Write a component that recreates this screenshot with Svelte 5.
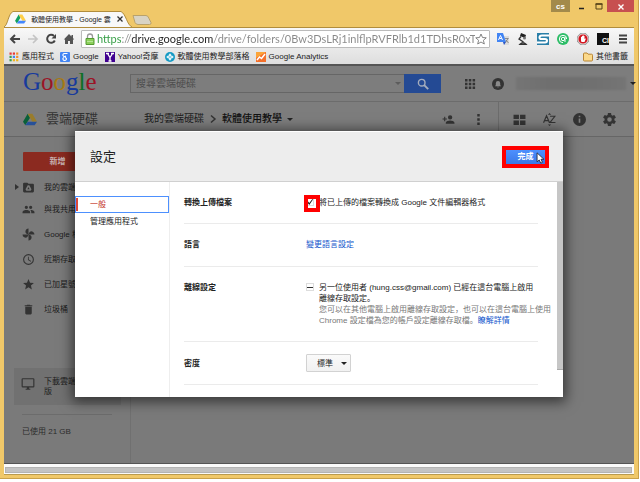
<script>
  const bookmarks = [
    { icon: 'apps', label: '應用程式' },
    { icon: 'google', label: 'Google' },
    { icon: 'yahoo', label: 'Yahoo!奇摩' },
    { icon: 'blog', label: '軟體使用教學部落格' },
    { icon: 'analytics', label: 'Google Analytics' }
  ];
  const places = [
    { label: '我的雲端硬碟', tree: true, d: 'M20 5h-8L10 3H4a2 2 0 0 0-2 2v14a2 2 0 0 0 2 2h16a2 2 0 0 0 2-2V7a2 2 0 0 0-2-2zM10.500 8h3l4 7-1.500 3H8l-1.500-3zm1.500 3-2 4h4z' },
    { label: '與我共用', d: 'M16 11a3 3 0 1 0 0-6 3 3 0 0 0 0 6zm-8 0a3 3 0 1 0 0-6 3 3 0 0 0 0 6zm0 2c-2.330 0-7 1.170-7 3.500V19h14v-2.500C15 14.170 10.330 13 8 13zm8 0c-.29 0-.62.02-.97.05 1.160.84 1.970 1.970 1.970 3.450V19h6v-2.500c0-2.330-4.670-3.500-7-3.500z' },
    { label: 'Google 相簿', d: 'M12 12V1a5.500 5.500 0 0 0-4.500 9zM12 12h11a5.500 5.500 0 0 0-9-4.500zM12 12v11a5.500 5.500 0 0 0 4.500-9zM12 12H1a5.500 5.500 0 0 0 9 4.500z' },
    { label: '近期存取', d: 'M12 2a10 10 0 1 0 0 20 10 10 0 0 0 0-20zm0 18a8 8 0 1 1 0-16 8 8 0 0 1 0 16zm.5-13H11v6l5.200 3.200.8-1.300-4.500-2.700z' },
    { label: '已加星號', d: 'M12 17.270 18.180 21l-1.640-7.030L22 9.240l-7.190-.61L12 2 9.190 8.630 2 9.240l5.460 4.730L5.820 21z' },
    { label: '垃圾桶', d: 'M6 19a2 2 0 0 0 2 2h8a2 2 0 0 0 2-2V7H6zM19 4h-3.500l-1-1h-5l-1 1H5v2h14z' }
  ];
  const logo = [['G', 'b'], ['o', 'r'], ['o', 'y'], ['g', 'b'], ['l', 'g'], ['e', 'r']];
  let convert = $state(true);
  let density = $state('標準');
  let url = $state('https://drive.google.com/drive/folders/0Bw3DsLRj1inlflpRVFRlb1d1TDhsR0xTbTV');
</script>

{#snippet drive(dim)}
  <svg class="drive" class:dim viewBox="0 0 24 22">
    <path fill="#11a05e" d="M8 1 0 15l4 6 8-13z" />
    <path fill="#ffcf48" d="M8 1h8l8 14h-8z" />
    <path fill="#4387fd" d="M8 15h16l-4 6H4z" />
  </svg>
{/snippet}

<div class="window">
  <header class="titlebar">
    <div class="tab">
      <svg class="tabshape" viewBox="0 0 128 16" preserveAspectRatio="none">
        <path d="M0 16C4 14 4 3 9 .5H117C122 3 123 14 128 16" fill="#f8f8f8" stroke="#b18d3c" />
      </svg>
      {@render drive(false)}
      <span class="tabtitle">軟體使用教學 - Google 雲</span>
      <button class="x" aria-label="關閉分頁"><svg viewBox="0 0 8 8"><path d="m1.500 1.500 5 5m0-5-5 5" stroke="#333" stroke-width="1.300" /></svg></button>
    </div>
    <button class="newtab" aria-label="新分頁"><svg viewBox="0 0 20 10"><path d="M1 .5h13q2 0 3 3l2 4q.5 2-1.500 2H6q-2 0-3-2z" fill="#d8d3c4" stroke="#b9a26b" /></svg></button>
    <div class="controls">
      <button class="user">cs</button>
      <button class="ctl" aria-label="最小化"><svg viewBox="0 0 10 10"><path d="M2 7.500h5" stroke="#222" stroke-width="1.500" /></svg></button>
      <button class="ctl" aria-label="最大化"><svg viewBox="0 0 10 10"><path d="M2 3h6v5H2z" fill="none" stroke="#554218" /><path d="M1.500 3h7" stroke="#554218" stroke-width="1.500" /></svg></button>
      <button class="ctl close" aria-label="關閉"><svg viewBox="0 0 10 10"><path d="m2.500 3.500 5 5m0-5-5 5" stroke="#fff" stroke-width="1.400" /></svg></button>
    </div>
  </header>

  <div class="chrome">
    <div class="nav">
      <button aria-label="上一頁"><svg viewBox="0 0 12 12"><path d="M11 6H2.500M6 2 2 6l4 4" fill="none" stroke="#444" stroke-width="2" /></svg></button>
      <button aria-label="下一頁"><svg viewBox="0 0 12 12"><path d="M1 6h8.500M6 2l4 4-4 4" fill="none" stroke="#c4c4c4" stroke-width="1.700" /></svg></button>
      <button aria-label="重新載入"><svg viewBox="0 0 12 12"><path d="M9.800 7.500A4 4 0 1 1 9 3" fill="none" stroke="#444" stroke-width="2" /><path d="M11 1v4.500H6.500z" fill="#444" /></svg></button>
      <button aria-label="首頁"><svg viewBox="0 0 12 12"><path d="M6 1 .8 6.500H2V11h3V8h2v3h3V6.500h1.200L10 5V2H8.500v1.500z" fill="#555" /></svg></button>
      <div class="omnibox">
        <svg class="lock" viewBox="0 0 10 12"><path d="M2.500 6V3.500a2.500 2.500 0 0 1 5 0V6" fill="none" stroke="#999" stroke-width="1.300" /><path d="M1 5.500h8v6H1z" fill="#8cd05c" stroke="#559a32" /><path d="M2 8.500h6" stroke="#b8e69a" /></svg>
        <input class="url" aria-label="網址" bind:value={url} />
        <svg class="star" viewBox="0 0 24 24"><path d="m12 2 3 7 7.500.6-5.700 5 1.800 7.400-6.600-4-6.600 4 1.800-7.400-5.700-5L9 9z" fill="#fff" stroke="#777" stroke-width="1.800" /></svg>
      </div>
      <div class="extensions">
        <button aria-label="翻譯"><svg viewBox="0 0 12 12"><path d="M5 3h7v9H7z" fill="#dcdcdc" /><path d="M0 0h6l3 9H0z" fill="#4285f4" /><path d="M6 9h3l-2 3z" fill="#2a56c6" /><path d="m1.500 7 2-4.500 2 4.500M2.300 5.500h2.400" fill="none" stroke="#fff" /><path d="M8 5.500h3.500M8.500 9.500l2.500-4M9 7l2.500 3" stroke="#777" stroke-width=".8" /></svg></button>
        <button aria-label="檯燈"><svg viewBox="0 0 12 12"><path d="m4 0 5 2-1 3-5-2z" fill="#222" /><path d="M4 3.500 2 6l4.500 3M3 11.300q3-3 6 0z" fill="none" stroke="#333" stroke-width="1.300" /><circle cx="7.500" cy="5" r="1.500" fill="#777" /></svg></button>
        <button aria-label="擷取"><svg viewBox="0 0 12 12"><path d="M0 0h12v12H0z" fill="#2a7fa8" /><path d="M12 2.500H5Q2.500 2.500 2.500 4.500T5 6h3q2 0 2 1.700T8 9.500H0" fill="none" stroke="#fff" stroke-width="2" /></svg></button>
        <button aria-label="聊天"><svg viewBox="0 0 12 12"><circle cx="6" cy="6" r="6" fill="#2dbd67" /><path d="M7.700 6a1.700 1.700 0 1 0-3.400 0 1.700 1.700 0 0 0 3.400 0zM8 4v5M6 9.700A3.700 3.700 0 1 1 9.700 6" fill="none" stroke="#fff" /></svg></button>
        <button aria-label="封鎖廣告"><svg viewBox="0 0 12 12"><path d="M3.500 0h5L12 3.500v5L8.500 12h-5L0 8.500v-5z" fill="#999" /><circle cx="6" cy="6" r="5" fill="#d2141e" stroke="#fff" stroke-width=".7" /><path d="M4 4h.8V3h.9v-.7h.9V3h.9v3l.8-.7.5.6L7.500 9h-3L4 7.500z" fill="#fff" /></svg></button>
        <button class="ci" aria-label="CI">CI</button>
        <button aria-label="選單"><svg viewBox="0 0 12 12"><path d="M2 2.500h8M2 6h8M2 9.500h8" stroke="#444" stroke-width="1.800" /></svg></button>
      </div>
    </div>

    <nav class="bookmarks" aria-label="書籤列">
      {#each bookmarks as b}
        <a href="#{b.icon}">
          <svg viewBox="0 0 10 10">
            {#if b.icon === 'apps'}
              {#each ['#e53935', '#e53935', '#f4902b', '#3c9e4b', '#4285f4', '#f4902b', '#3c9e4b', '#f1b51c', '#f1b51c'] as c, i}
                <rect x={0.5 + (i % 3) * 3.3} y={0.5 + Math.floor(i / 3) * 3.3} width="2.2" height="2.2" fill={c} />
              {/each}
            {:else if b.icon === 'google'}
              <rect width="10" height="10" rx="1" fill="#4285f4" />
              <path d="M7.500 1.500H5a1.700 1.500 0 1 0 .8 2.500q-1.500 1.500.5 2.200A1.800 1.500 0 1 1 4 5.500" fill="none" stroke="#fff" stroke-width="1.100" />
            {:else if b.icon === 'yahoo'}
              <path d="M0 0h10v10H0z" fill="#400090" /><path d="M1 1.500h3M6 1.500h3M2.500 1.500 5 5.500l2.500-4M5 5v4M3.500 9h3" fill="none" stroke="#fff" stroke-width="1.300" />
            {:else if b.icon === 'blog'}
              <circle cx="5" cy="5" r="5" fill="#159ac4" /><path d="m5 1.200 1.700 2L5 5 3.300 3.200zM5 5l1.700 1.800L5 8.800 3.300 6.800zM1.200 5 3 3.500 4.500 5 3 6.500zM5.500 5 7 3.500 8.800 5 7 6.500z" fill="#e6f6fb" />
            {:else}
              <path d="M0 0h10v10H0z" fill="#f5702a" /><path d="M0 0h10L0 6z" fill="#fba43a" /><path d="m1 8 2.500-3 2 1.500L9 2" fill="none" stroke="#fff" stroke-width="1.500" />
            {/if}
          </svg>
          {b.label}
        </a>
      {/each}
      <a class="other" href="#other">
        <svg viewBox="0 0 10 10"><path d="M.5 2q0-1 1-1H4l1 1.200h3.500q1 0 1 1V8q0 1-1 1h-7q-1 0-1-1z" fill="#fbd98b" stroke="#b98532" /></svg>
        其他書籤
      </a>
    </nav>
  </div>

  <div class="page">
    <div class="searchbar">
      <div class="google">{#each logo as [ch, c]}<span class={c}>{ch}</span>{/each}</div>
      <div class="search">
        <input aria-label="搜尋" placeholder="搜尋雲端硬碟" />
        <i class="caret faint"></i>
        <button aria-label="搜尋"><svg viewBox="0 0 12 12"><circle cx="4.700" cy="4.700" r="3.300" fill="none" stroke="#a5adbd" stroke-width="1.400" /><path d="m7.200 7.200 4 4" stroke="#a5adbd" stroke-width="1.900" /></svg></button>
      </div>
      <div class="account">
        <button aria-label="應用程式"><svg viewBox="0 0 12 12"><path d="M1 1h2.500v2.500H1zM4.800 1h2.500v2.500H4.800zM8.600 1h2.500v2.500H8.600zM1 4.800h2.500v2.500H1zM4.800 4.800h2.500v2.500H4.800zM8.600 4.800h2.500v2.500H8.600zM1 8.600h2.500v2.500H1zM4.800 8.600h2.500v2.500H4.800zM8.600 8.600h2.500v2.500H8.600z" /></svg></button>
        <button aria-label="通知"><svg viewBox="0 0 12 12"><circle cx="6" cy="6" r="6" /><path d="M3 8.300 3.800 7V5.300a2.200 2.200 0 0 1 4.400 0V7l.8 1.300zM5.200 8.700h1.600a.8.8 0 0 1-1.600 0z" style:fill="#8a8a8a" /></svg></button>
        <span class="masked"></span>
        <i class="caret"></i>
      </div>
    </div>

    <div class="toolbar">
      <div class="brand">{@render drive(true)}<span>雲端硬碟</span></div>
      <div class="crumbs">
        <a href="#root">我的雲端硬碟</a>
        <svg viewBox="0 0 8 10"><path d="m2 1.500 4 3.500-4 3.500" fill="none" stroke="#333" stroke-width="1.500" /></svg>
        <a class="here" href="#folder">軟體使用教學</a>
        <i class="caret"></i>
      </div>
      <div class="tools">
        <button aria-label="共用"><svg viewBox="0 0 24 24"><path d="M15 12a4 4 0 1 0 0-8 4 4 0 0 0 0 8zm-9-2V7H4v3H1v2h3v3h2v-3h3v-2zm9 4c-2.670 0-8 1.340-8 4v2h16v-2c0-2.660-5.330-4-8-4z" /></svg></button>
        <button aria-label="更多"><svg viewBox="0 0 24 24"><path d="M9.700 2h4.600v4.600H9.700zM9.700 9.700h4.600v4.600H9.700zM9.700 17.400h4.600V22H9.700z" /></svg></button>
      </div>
      <div class="tools view">
        <button aria-label="格狀檢視"><svg viewBox="0 0 24 24"><path d="M1 3h10v8H1zM13 3h10v8H13zM1 14h10v8H1zM13 14h10v8H13z" /></svg></button>
        <button aria-label="排序"><svg viewBox="0 0 24 24"><path d="m1 18 5.500-13L12 18M3.500 14h6M13 6h9L13 17.500h10" fill="none" stroke="#333" stroke-width="2.200" /><path d="m9 3 3-3 3 3zM9 21l3 3 3-3z" /></svg></button>
        <button aria-label="詳細資料"><svg viewBox="0 0 24 24"><path fill-rule="evenodd" d="M12 0a12 12 0 1 0 0 24 12 12 0 0 0 0-24zm1.500 18h-3v-8h3zm0-10h-3V5h3z" /></svg></button>
        <button aria-label="設定"><svg viewBox="2 2 20 20"><path d="M19.430 12.980c.04-.32.07-.64.07-.98s-.03-.66-.07-.98l2.110-1.650a.5.5 0 0 0 .12-.64l-2-3.460a.5.5 0 0 0-.61-.22l-2.490 1a7.300 7.300 0 0 0-1.690-.98l-.38-2.650A.49.49 0 0 0 14 2h-4a.49.49 0 0 0-.49.42l-.38 2.650c-.61.25-1.170.59-1.690.98l-2.490-1a.49.49 0 0 0-.61.22l-2 3.460a.49.49 0 0 0 .12.64l2.110 1.650c-.04.32-.07.65-.07.98s.03.66.07.98l-2.110 1.650a.5.5 0 0 0-.12.64l2 3.460c.12.22.39.3.61.22l2.490-1c.52.4 1.080.73 1.690.98l.38 2.650c.03.24.24.42.49.42h4c.25 0 .46-.18.49-.42l.38-2.650c.61-.25 1.170-.59 1.690-.98l2.490 1c.23.09.49 0 .61-.22l2-3.460a.5.5 0 0 0-.12-.64zM12 15.500a3.500 3.500 0 1 1 0-7 3.500 3.500 0 0 1 0 7z" /></svg></button>
      </div>
    </div>

    <div class="main">
      <aside>
        <button class="create">新增</button>
        {#each places as p}
          <a class="place" class:tree={p.tree} href="#{p.label}">
            <svg viewBox="0 0 24 24"><path fill-rule="evenodd" d={p.d} /></svg>{p.label}
          </a>
        {/each}
        <a class="download" href="#download">
          <svg viewBox="0 0 24 24"><path d="M21 2H3a2 2 0 0 0-2 2v12a2 2 0 0 0 2 2h7v2H8v2h8v-2h-2v-2h7a2 2 0 0 0 2-2V4a2 2 0 0 0-2-2zm0 14H3V4h18z" /></svg>
          <span>下載雲端硬碟電腦版</span>
        </a>
        <p class="quota">已使用 21 GB</p>
      </aside>
    </div>

    <div class="overlay">
      <div class="dialog" role="dialog" aria-labelledby="title">
        <header>
          <h1 id="title">設定</h1>
          <div class="done">
            <button>完成</button>
            <svg class="pointer" viewBox="0 0 10 14"><path d="M1 1v10.500l2.500-2.200L5.300 13l2-1-1.700-3.500H9z" /></svg>
          </div>
        </header>
        <div class="body">
          <nav>
            <a class="active" href="#general">一般</a>
            <a href="#apps">管理應用程式</a>
          </nav>
          <div class="rows">
            <section>
              <h2>轉換上傳檔案</h2>
              <div class="opt">
                <input type="checkbox" id="convert" bind:checked={convert} />
                <label for="convert">將已上傳的檔案轉換成 Google 文件編輯器格式</label>
                <span class="mark"></span>
              </div>
            </section>
            <section>
              <h2>語言</h2>
              <a href="#language">變更語言設定</a>
            </section>
            <section>
              <h2>離線設定</h2>
              <div class="opt">
                <input type="checkbox" id="offline" class="mixed" />
                <div>
                  <label for="offline">另一位使用者 (hung.css@gmail.com) 已經在這台電腦上啟用<br />離線存取設定。</label>
                  <p class="hint">您可以在其他電腦上啟用離線存取設定，也可以在這台電腦上使用<br />Chrome 設定檔為您的帳戶設定離線存取檔。<a href="#more">瞭解詳情</a></p>
                </div>
              </div>
            </section>
            <section class="tall">
              <h2><label for="density">密度</label></h2>
              <div class="pick">
                <select id="density" bind:value={density}><option>標準</option><option>適中</option><option>緊密</option></select>
                <i class="caret"></i>
              </div>
            </section>
          </div>
          <div class="scroll"><i></i></div>
        </div>
      </div>
    </div>
  </div>
  <div class="hscroll"><i></i></div>
</div>

<style>
  :global(body) { margin: 0; background: #fff; }
  * { box-sizing: border-box; }
  .window {
    display: flex; flex-direction: column;
    height: calc(100vh - 3px); margin-right: 1px; padding: 0 4px 3px;
    background: #f0c869; border: solid #c9a149; border-width: 0 1px 1px 0;
    font: 8px/11px "Liberation Sans", "Noto Sans CJK TC", sans-serif; color: #222;
    white-space: nowrap; overflow: hidden;
  }
  button { padding: 0; border: 0; background: none; font: inherit; color: inherit; display: grid; place-items: center; }
  svg { display: block; flex: none; }
  a { color: inherit; text-decoration: none; }
  h1, h2, p { margin: 0; font: inherit; }
  .caret { flex: none; border: 3px solid transparent; border-top-color: #222; border-bottom: 0; }
  .drive { width: 11px; height: 10px; }
  .dim { width: 14px; height: 13px; filter: brightness(.6); }

  .titlebar { display: flex; height: 27px; align-items: flex-end; flex: none; }
  .tab { position: relative; display: flex; align-items: center; justify-content: space-between; width: 128px; height: 16px; padding: 0 8px 0 11px; font: 7px/11px "Liberation Sans", "Noto Sans CJK TC", sans-serif; }
  .tab > * { position: relative; }
  .tab .tabshape { position: absolute; inset: 0; width: 100%; height: 100%; }
  .x svg { width: 8px; height: 8px; }
  .newtab { margin-bottom: 2px; }
  .newtab svg { width: 20px; height: 10px; }
  .controls { display: flex; align-self: flex-start; margin-left: auto; height: 12px; }
  .controls svg { width: 10px; height: 10px; }
  .user { width: 19px; margin-right: 3px; background: #a38a4b; color: #fff; font-weight: bold; }
  .ctl { width: 17px; }
  .close { width: 27px; background: #c75050; }

  .chrome { background: linear-gradient(#f8f8f8, #dedede); border-top: 1px solid #b18d3c; flex: none; }
  .nav { display: flex; align-items: center; height: 21px; padding: 0 5px; gap: 6px; }
  .nav svg { width: 12px; height: 12px; }
  .omnibox { display: flex; align-items: center; flex: 1; height: 18px; padding: 0 2px 0 3px; background: #fff; border: 1px solid #bbb; border-radius: 1px; min-width: 0; }
  .omnibox .lock { width: 10px; }
  .url {
    flex: 1; min-width: 0; height: 16px; margin: 0 0 0 2px; padding: 0; border: 0; outline: 0;
    font: 11px/16px Lato, sans-serif; color: transparent;
    background: linear-gradient(90deg, #2e9a3e 25px, #888 25px 35px, #222 35px 117px, #888 117px);
    -webkit-background-clip: text; background-clip: text;
  }
  .extensions { display: flex; gap: 8px; margin-left: 1px; }
  .ci { width: 12px; height: 12px; background: #111; color: #fff; font-size: 7px; font-weight: bold; align-items: end; justify-items: end; line-height: 8px; }
  .bookmarks { display: flex; align-items: center; gap: 6px; height: 15px; padding: 0 6px 0 5px; }
  .bookmarks a { display: flex; align-items: center; gap: 3px; }
  .bookmarks svg { width: 10px; height: 10px; }
  .bookmarks .other { margin-left: auto; }

  .page { position: relative; display: flex; flex-direction: column; flex: 1; border: solid #555; border-width: 2px 0 1px; background: #7a7a7a; color: #1c1c1c; min-height: 0; }
  .page svg { fill: #333; }
  .searchbar { display: flex; align-items: center; height: 36px; padding-left: 19px; background: #7d7d7d; border-bottom: 1px solid #6c6c6c; }
  .google { width: 107px; font: 25px/28px "Liberation Serif", serif; margin-top: -4px; }
  .b { color: #173a9c; } .r { color: #9b1426; } .y { color: #a87a12; } .g { color: #0b7022; }
  .search { display: flex; align-items: center; width: 311px; height: 19px; border: 1px solid #666; border-right: 0; }
  .search input { flex: 1; min-width: 0; padding: 0 5px; border: 0; outline: 0; background: none; font: 10px/16px "Liberation Sans", "Noto Sans CJK TC", sans-serif; }
  .search input::placeholder { color: #4d4d4d; }
  .search .faint { border-top-color: #5c5c5c; margin-right: 3px; }
  .search button { width: 37px; height: 19px; background: #244a94; }
  .search svg { width: 12px; height: 12px; }
  .account { display: flex; align-items: center; flex: 1; margin-left: 23px; gap: 16px; }
  .account svg { width: 12px; height: 12px; }
  .account button + .masked { margin-left: -4px; }
  .masked { flex: 1; height: 13px; background: linear-gradient(90deg, #757575, #6f6f6f 30%, #707070 70%, #757575); filter: blur(1px); }
  .account .caret { margin: 0 -2px 0 -12px; }
  .toolbar { display: flex; align-items: center; height: 35px; background: #7d7d7d; border-bottom: 1px solid #666; }
  .brand { display: flex; align-items: center; gap: 9px; width: 140px; padding-left: 19px; font-size: 13px; line-height: 18px; color: #333; }
  .crumbs { display: flex; align-items: center; gap: 5px; font-size: 10px; line-height: 14px; }
  .crumbs svg { width: 8px; height: 10px; }
  .here { font-weight: 500; color: #111; }
  .tools { display: flex; gap: 17px; margin-left: auto; padding-right: 13px; }
  .tools svg { width: 13px; height: 13px; }
  .view { height: 34px; margin: 0; padding: 0 18px 0 14px; border-left: 1px solid #6c6c6c; }
  .main { flex: 1; display: flex; min-height: 0; }
  aside { display: flex; flex-direction: column; width: 127px; padding: 15px 9px 0 10px; border-right: 1px solid #707070; }
  .create { width: 69px; height: 19px; margin: 0 0 6px 9px; border-radius: 1px; background: #8b2a20; color: #c9b5b3; font-weight: bold; flex: none; }
  .place { position: relative; display: flex; align-items: center; gap: 9px; height: 25px; padding-left: 8px; flex: none; }
  .place svg { width: 13px; height: 13px; }
  .tree { height: 20px; }
  .tree::before { content: ''; position: absolute; left: 1px; border: 3px solid transparent; border-left: 4px solid #333; border-right: 0; }
  .download { display: flex; gap: 9px; margin-top: 46px; padding: 9px 4px 8px 7px; background: #717171; white-space: normal; line-height: 10px; }
  .download span { width: 66px; }
  .download svg { width: 14px; height: 14px; }
  .quota { margin: 9px 9px 0 8px; padding-top: 11px; border-top: 1px solid #6c6c6c; color: #2c2c2c; }

  .overlay { position: absolute; inset: 0; display: flex; justify-content: center; align-items: flex-start; padding-top: 65px; }
  .dialog { width: 488px; max-width: 100%; background: #fff; color: #222; box-shadow: 0 2px 12px 3px rgba(0, 0, 0, .55); }
  .dialog header { display: flex; align-items: center; justify-content: space-between; height: 51px; padding: 0 14px 0 15px; background: #ededed; border: solid #fff; border-width: 1px 0 0; border-bottom: 1px solid #d0d0d0; }
  h1 { font-size: 13px; line-height: 18px; }
  .done { position: relative; border: 4px solid #f00; }
  .done button { width: 39px; height: 14px; background: linear-gradient(#4d90fe, #3b78e7); color: #fff; font-weight: bold; }
  .done .pointer { position: absolute; right: 0; top: 2px; width: 9px; height: 12px; fill: #fff; stroke: #223; }
  .body { display: flex; }
  .body nav { flex: none; width: 95px; padding-top: 14px; border-right: 1px solid #eee; }
  .body nav a { display: block; padding: 3px 15px; }
  .body nav .active { position: relative; border: 1px solid #4d90fe; padding: 2px 14px; color: #c53727; }
  .active::before { content: ''; position: absolute; left: 0; top: 1px; bottom: 1px; width: 2px; background: #dd4b39; }
  .rows { flex: 1; min-width: 0; padding: 0 19px 12px 14px; font-family: "Liberation Sans", "Noto Sans CJK JP", sans-serif; }
  section { display: flex; padding: 15px 0; border-bottom: 1px solid #ebebeb; }
  section:nth-child(2) { padding-bottom: 16px; }
  h2 { width: 122px; flex: none; font-weight: bold; }
  section > a, .hint a { color: #15c; }
  .hint { color: #777; }
  .opt { position: relative; display: flex; gap: 5px; }
  .opt input { appearance: none; display: grid; place-items: center; flex: none; width: 8px; height: 8px; margin: 1px 0 0; border: 1px solid #ddd; background: #fff; }
  .opt input:checked::before { content: ''; width: 6px; height: 6px; background: #222; clip-path: polygon(0 50%, 18% 40%, 38% 65%, 90% 0, 100% 10%, 38% 100%); }
  .opt .mixed::before { content: ''; width: 6px; height: 1px; background: #333; }
  .mark { position: absolute; left: -2px; top: -2px; width: 16px; height: 17px; border: 4px solid #f00; }
  .tall { align-items: center; padding: 12px 0; }
  .pick { position: relative; display: flex; align-items: center; }
  .pick select { appearance: none; width: 45px; height: 18px; padding: 0 10px; border: 1px solid #d2d2d2; border-radius: 1px; background: linear-gradient(#fafafa, #f1f1f1); font: inherit; color: #222; }
  .pick .caret { position: absolute; right: 4px; pointer-events: none; }
  .scroll { flex: none; width: 6px; }
  .scroll i { display: block; height: 188px; background: #c6c6c6; border-bottom: 1px solid #aaa; }
  .hscroll { height: 11px; padding: 3px 2px 2px 1px; background: #fafafa; flex: none; border-bottom: 1px solid #b99a4e; }
  .hscroll i { display: block; height: 6px; background: #c3c3c3; border: 1px solid #b3b3b3; }
</style>
